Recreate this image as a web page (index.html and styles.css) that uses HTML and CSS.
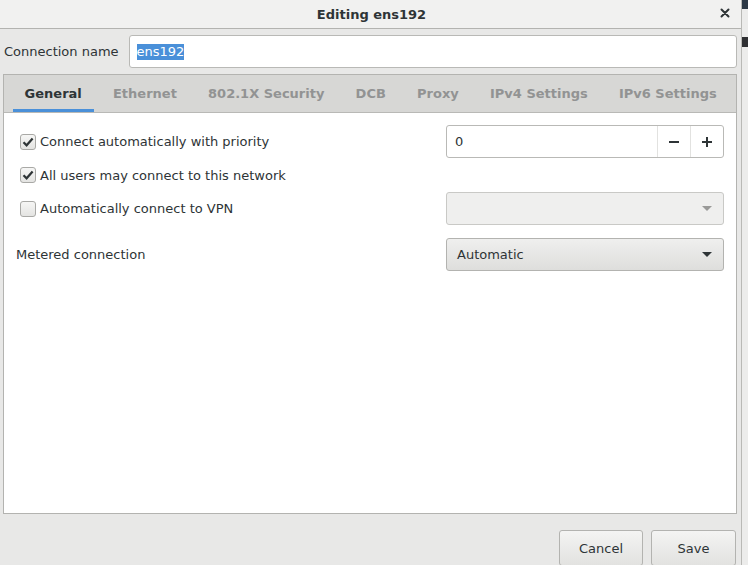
FILE: index.html
```html
<!DOCTYPE html>
<html>
<head>
<meta charset="utf-8">
<link rel="stylesheet" href="styles.css">
</head>
<body>
<div class="window">
  <div class="titlebar">
    <div></div>
    <div class="title">Editing ens192</div>
    <div class="close-wrap">
      <svg class="close" width="10" height="10" viewBox="0 0 10 10"><path d="M1.5 1.5 L8.5 8.5 M8.5 1.5 L1.5 8.5" stroke="#2e3436" stroke-width="2" stroke-linecap="round"/></svg>
    </div>
  </div>
  <div class="name-row">
    <span class="label">Connection name</span>
    <div class="entry"><span class="sel">ens192</span></div>
  </div>
  <div class="notebook">
    <div class="tabs">
      <div class="tab active">General</div>
      <div class="tab">Ethernet</div>
      <div class="tab">802.1X Security</div>
      <div class="tab">DCB</div>
      <div class="tab">Proxy</div>
      <div class="tab">IPv4 Settings</div>
      <div class="tab">IPv6 Settings</div>
    </div>
    <div class="page">
      <div class="grid">
        <label class="check"><span class="box on"><svg width="12" height="12" viewBox="0 0 12 12"><path d="M1.5 6.2 L4.6 9.3 L10.6 2.6" fill="none" stroke="#2e3436" stroke-width="2.2"/></svg></span>Connect automatically with priority</label>
        <div class="spin">
          <div class="spin-val">0</div>
          <div class="spin-btn"><svg width="12" height="12" viewBox="0 0 12 12"><path d="M1 6 H11" stroke="#2e3436" stroke-width="2"/></svg></div>
          <div class="spin-btn"><svg width="12" height="12" viewBox="0 0 12 12"><path d="M1 6 H11 M6 1 V11" stroke="#2e3436" stroke-width="2"/></svg></div>
        </div>
        <label class="check"><span class="box on"><svg width="12" height="12" viewBox="0 0 12 12"><path d="M1.5 6.2 L4.6 9.3 L10.6 2.6" fill="none" stroke="#2e3436" stroke-width="2.2"/></svg></span>All users may connect to this network</label>
        <div></div>
        <label class="check"><span class="box"></span>Automatically connect to VPN</label>
        <div class="combo disabled"><span></span><svg width="10" height="6" viewBox="0 0 10 6"><path d="M0 0 H10 L5 5 Z" fill="#9a9a98"/></svg></div>
        <div class="plain metered">Metered connection</div>
        <div class="combo metered"><span>Automatic</span><svg width="10" height="6" viewBox="0 0 10 6"><path d="M0 0 H10 L5 5 Z" fill="#2e3436"/></svg></div>
      </div>
    </div>
  </div>
  <div class="actions">
    <div class="btn">Cancel</div>
    <div class="btn">Save</div>
  </div>
</div>
<div class="strip">
  <div class="strip-top"></div>
  <div class="strip-mid"></div>
</div>
</body>
</html>
```
FILE: styles.css
```css
* { box-sizing: border-box; }
html, body { margin: 0; height: 565px; overflow: hidden; }
body {
  display: flex;
  font-family: "DejaVu Sans", sans-serif;
  font-size: 13px;
  color: #2e3436;
  background: #ececeb;
}
.window {
  width: 742px;
  height: 565px;
  flex: none;
  background: #e8e8e7;
  border-right: 1px solid #b9b9b6;
  display: flex;
  flex-direction: column;
  overflow: hidden;
}
.titlebar {
  height: 29px;
  flex: none;
  background: #f1f1f0;
  border-bottom: 1px solid #b3b3b0;
  display: grid;
  grid-template-columns: 1fr auto 1fr;
  align-items: center;
}
.title { font-weight: bold; padding-left: 2px; }
.close-wrap { display: flex; justify-content: flex-end; padding-right: 11px; }
.close { display: block; margin-top: -2px; }
.name-row {
  flex: none;
  display: flex;
  align-items: center;
  gap: 10px;
  padding: 6px 4px 0 4px;
}
.label { white-space: nowrap; }
.entry {
  flex: 1;
  height: 33px;
  background: #fff;
  border: 1px solid #b9b9b6;
  border-radius: 3px;
  display: flex;
  align-items: center;
  padding-left: 7px;
}
.sel { background: #4a90d9; color: #fff; line-height: 16px; }
.notebook {
  flex: none;
  margin: 6px 4px 0 3px;
  height: 440px;
  border: 1px solid #b3b3b0;
  display: flex;
  flex-direction: column;
  background: #fff;
}
.tabs {
  height: 38px;
  flex: none;
  background: #d7d7d5;
  border-bottom: 1px solid #b9b9b6;
  display: flex;
  padding-left: 5px;
  overflow: hidden;
}
.tab {
  flex: none;
  white-space: nowrap;
  margin: 0 3.6px;
  padding: 0 12px;
  font-weight: bold;
  color: #929393;
  display: flex;
  align-items: center;
  border-bottom: 3px solid transparent;
  padding-top: 3px;
}
.tab.active { color: #2e3436; border-bottom-color: #4a90d9; }
.page { flex: 1; padding: 12px 12px 0 12px; }
.grid {
  display: grid;
  grid-template-columns: 1fr 278px;
  grid-template-rows: 33px 34px 33px 46px;
  align-items: center;
}
.metered { align-self: end; }
.plain.metered { align-self: end; line-height: 33px; }
.check { display: flex; align-items: center; gap: 4px; padding-left: 4px; }
.box {
  width: 16px; height: 16px;
  border: 1px solid #a9a9a6;
  border-radius: 3px;
  background: linear-gradient(#f6f6f5, #e4e4e2);
  display: flex; align-items: center; justify-content: center;
}
.spin {
  height: 33px;
  display: flex;
  border: 1px solid #b9b9b6;
  border-radius: 3px;
  background: #fff;
}
.spin-val { flex: 1; display: flex; align-items: center; padding-left: 8px; }
.spin-btn {
  width: 33px;
  border-left: 1px solid #e2e2e0;
  display: flex; align-items: center; justify-content: center;
}
.combo {
  height: 33px;
  border: 1px solid #b3b3b0;
  border-radius: 3px;
  display: flex;
  align-items: center;
  justify-content: space-between;
  padding: 0 11px 0 10px;
  background: linear-gradient(#efefee, #dededc);
}
.combo.disabled { background: #efefee; border-color: #c9c9c6; }
.actions {
  flex: none;
  display: flex;
  justify-content: flex-end;
  gap: 8px;
  padding: 16px 5px 0 0;
}
.btn {
  height: 36px;
  width: 84px;
  border: 1px solid #b3b3b0;
  border-radius: 3px;
  background: linear-gradient(#f4f4f3, #e2e2e0);
  display: flex; align-items: center; justify-content: center;
}
.btn + .btn { width: 85px; }
.strip { flex: 1; display: flex; flex-direction: column; }
.strip-top { height: 9px; background: #2c3845; }
.strip-mid { height: 10px; margin-top: 28px; background: #2f3033; }
```
